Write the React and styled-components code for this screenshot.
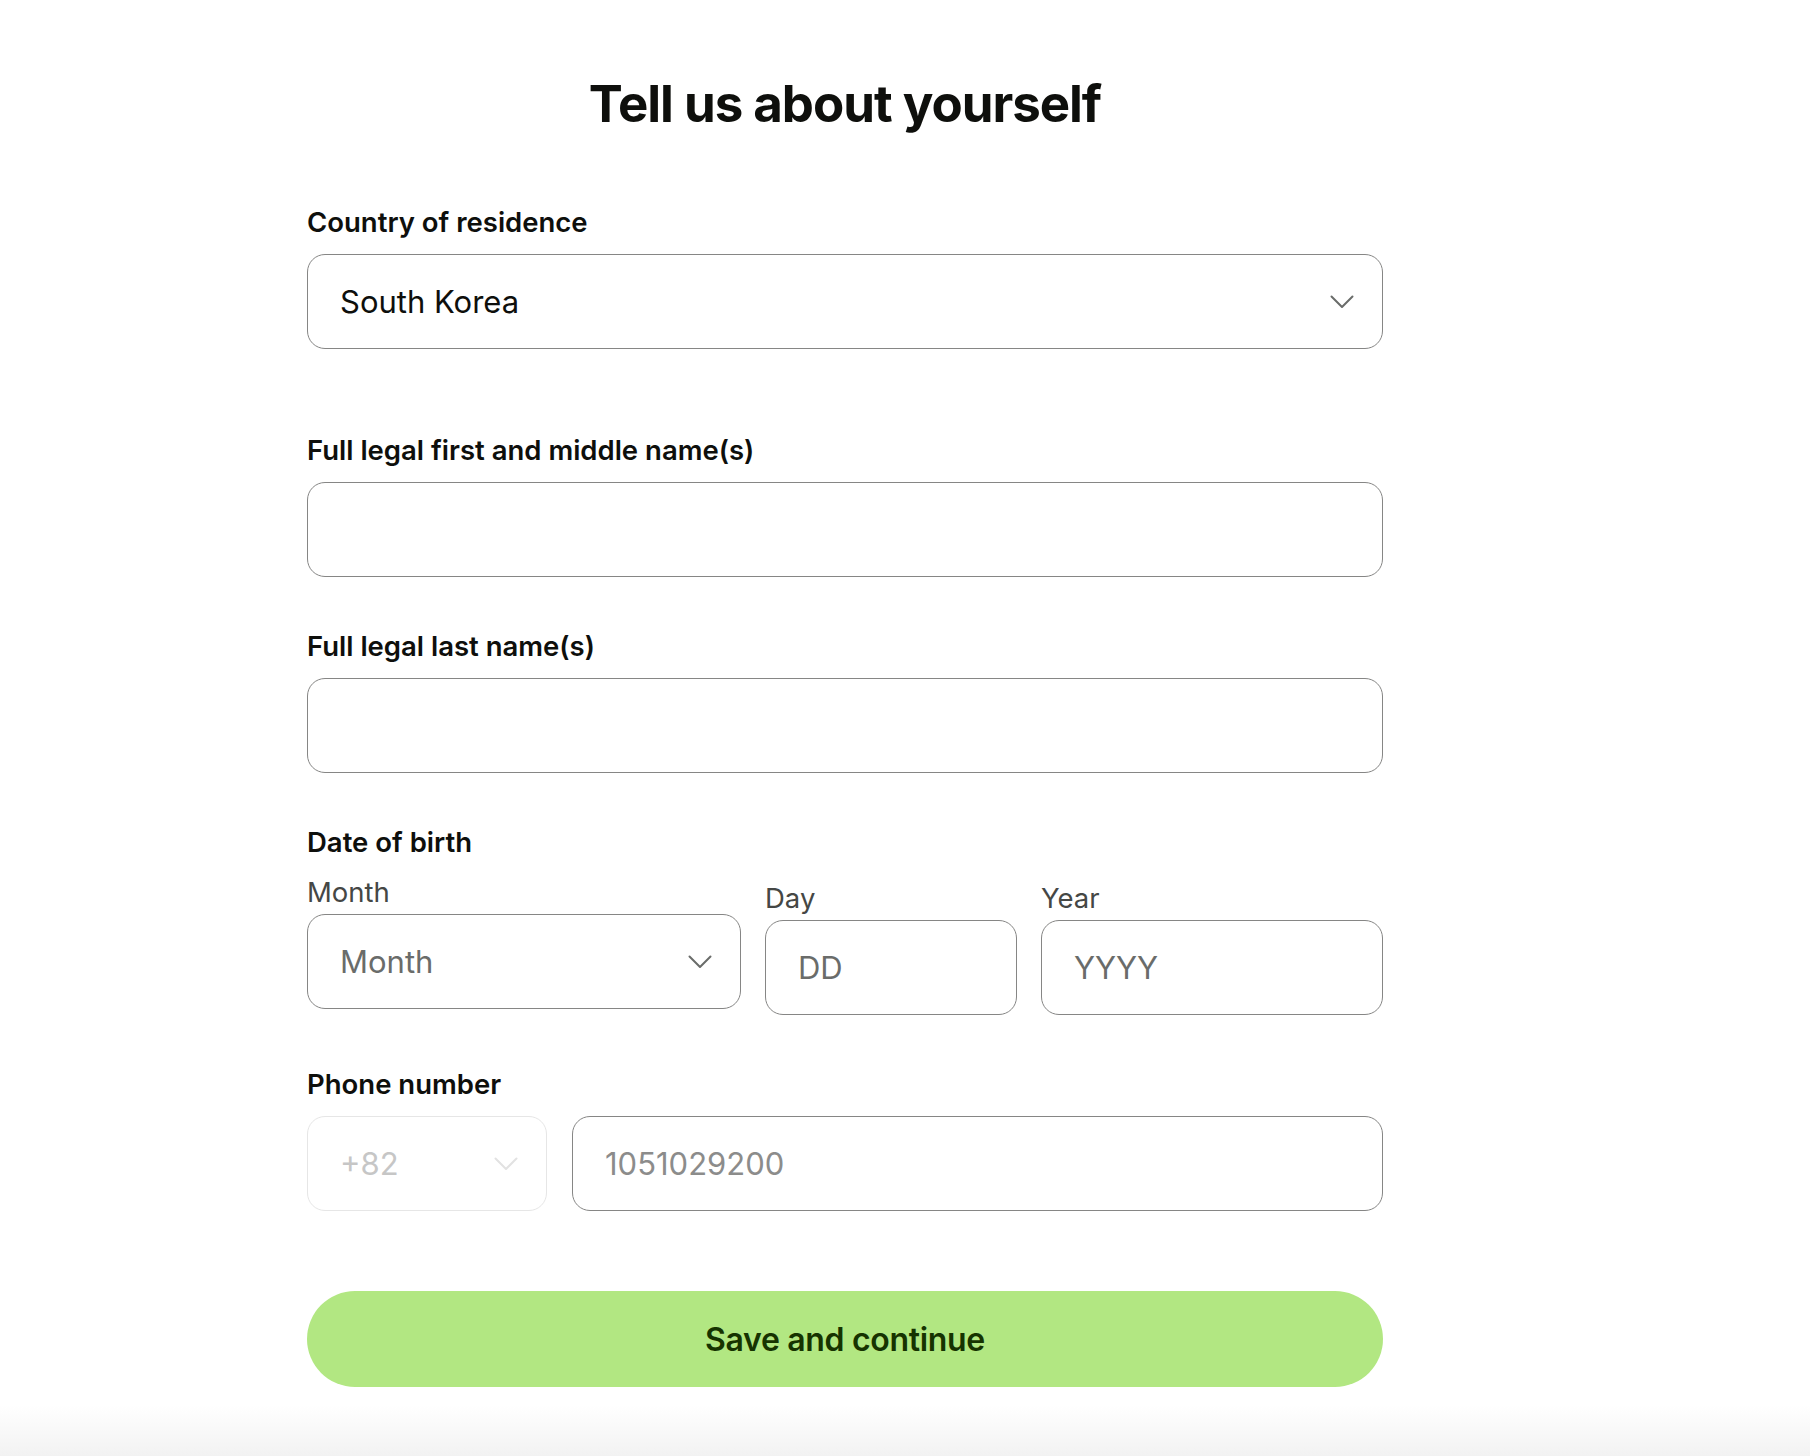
import React from 'react';
import styled, { createGlobalStyle } from 'styled-components';

const GlobalStyle = createGlobalStyle`
  * { box-sizing: border-box; }
  html, body {
    margin: 0;
    padding: 0;
    background: #ffffff;
  }
  body {
    font-family: Inter, "Noto Sans", "Liberation Sans", sans-serif;
    color: #0e0f0c;
    -webkit-font-smoothing: antialiased;
  }
`;

const Page = styled.div`
  min-height: 1456px;
  display: flex;
  flex-direction: column;
  background: linear-gradient(to bottom, #ffffff 0, #ffffff 1405px, #f2f2f2 1456px);
`;

const Column = styled.main`
  width: 1076px;
  margin-left: 307px;
  padding-top: 74px;
  display: flex;
  flex-direction: column;
`;

const Title = styled.h1`
  margin: 0 0 72px;
  font-size: 51px;
  line-height: 60px;
  font-weight: 700;
  letter-spacing: -0.02em;
  text-align: center;
  color: #0e0f0c;
`;

const Field = styled.div`
  display: flex;
  flex-direction: column;
  margin-bottom: ${p => p.$gap || 53}px;
`;

const Label = styled.label`
  font-size: 27.5px;
  line-height: 32px;
  font-weight: 600;
  color: #0e0f0c;
  margin-bottom: ${p => p.$mb ?? 16}px;
`;

const SubLabel = styled.span`
  font-size: 27.5px;
  line-height: 32px;
  font-weight: 400;
  color: #454745;
  margin-bottom: 6px;
`;

const Box = styled.div`
  height: 95px;
  min-width: 0;
  display: flex;
  align-items: center;
  border: 1.5px solid ${p => (p.$muted ? '#e6e6e6' : '#868685')};
  border-radius: 18px;
  background: #fff;
  padding: 0 28px 0 0;
`;

const TextInput = styled.input`
  flex: 1;
  width: 100%;
  min-width: 0;
  height: 100%;
  border: none;
  outline: none;
  background: transparent;
  padding: 0 0 0 32px;
  font-family: inherit;
  font-size: 31px;
  color: #0e0f0c;

  &::placeholder {
    color: ${p => p.$ph || '#6a6c6a'};
    opacity: 1;
  }
`;

const NativeSelect = styled.select`
  flex: 1;
  min-width: 0;
  height: 100%;
  border: none;
  outline: none;
  background: transparent;
  appearance: none;
  -webkit-appearance: none;
  padding: 0 0 0 32px;
  font-family: inherit;
  font-size: 31px;
  color: ${p => p.$color || '#0e0f0c'};
  opacity: 1;
`;

const DateRow = styled.div`
  display: grid;
  grid-template-columns: 434px 252px minmax(0, 1fr);
  column-gap: 24px;
  margin-top: 18px;
  margin-bottom: 53px;
`;

const DatePart = styled.div`
  display: flex;
  flex-direction: column;
  min-width: 0;
  margin-top: ${p => p.$offset || 0}px;
`;

const PhoneRow = styled.div`
  display: grid;
  grid-template-columns: 240px minmax(0, 1fr);
  column-gap: 25px;
`;

const PrimaryButton = styled.button`
  margin-top: 80px;
  height: 96px;
  border: none;
  border-radius: 48px;
  background: #b2e782;
  color: #163300;
  font-family: inherit;
  font-size: 32px;
  font-weight: 600;
  letter-spacing: -0.01em;
  cursor: pointer;
`;

const Chevron = ({ color = '#6a6c6a' }) => (
  <svg width="24" height="14" viewBox="0 0 24 14" fill="none">
    <path d="M1.5 1.5 L12 12 L22.5 1.5" stroke={color} strokeWidth="2" strokeLinecap="round" strokeLinejoin="round" />
  </svg>
);

export default function App() {
  return (
    <Page>
      <GlobalStyle />
      <Column>
        <Title>Tell us about yourself</Title>

        <Field $gap={85}>
          <Label>Country of residence</Label>
          <Box>
            <NativeSelect defaultValue="KR">
              <option value="KR">South Korea</option>
            </NativeSelect>
            <Chevron />
          </Box>
        </Field>

        <Field>
          <Label>Full legal first and middle name(s)</Label>
          <Box>
            <TextInput type="text" />
          </Box>
        </Field>

        <Field>
          <Label>Full legal last name(s)</Label>
          <Box>
            <TextInput type="text" />
          </Box>
        </Field>

        <Label $mb={0}>Date of birth</Label>
        <DateRow>
          <DatePart>
            <SubLabel>Month</SubLabel>
            <Box>
              <NativeSelect defaultValue="" $color="#6a6c6a">
                <option value="" disabled>Month</option>
              </NativeSelect>
              <Chevron />
            </Box>
          </DatePart>
          <DatePart $offset={6}>
            <SubLabel>Day</SubLabel>
            <Box>
              <TextInput placeholder="DD" />
            </Box>
          </DatePart>
          <DatePart $offset={6}>
            <SubLabel>Year</SubLabel>
            <Box>
              <TextInput placeholder="YYYY" />
            </Box>
          </DatePart>
        </DateRow>

        <Label>Phone number</Label>
        <PhoneRow>
          <Box $muted>
            <NativeSelect defaultValue="82" $color="#c6c6c6" disabled>
              <option value="82">+82</option>
            </NativeSelect>
            <Chevron color="#e2e2e2" />
          </Box>
          <Box>
            <TextInput placeholder="1051029200" $ph="#8c8c8b" />
          </Box>
        </PhoneRow>

        <PrimaryButton type="button">Save and continue</PrimaryButton>
      </Column>
    </Page>
  );
}
